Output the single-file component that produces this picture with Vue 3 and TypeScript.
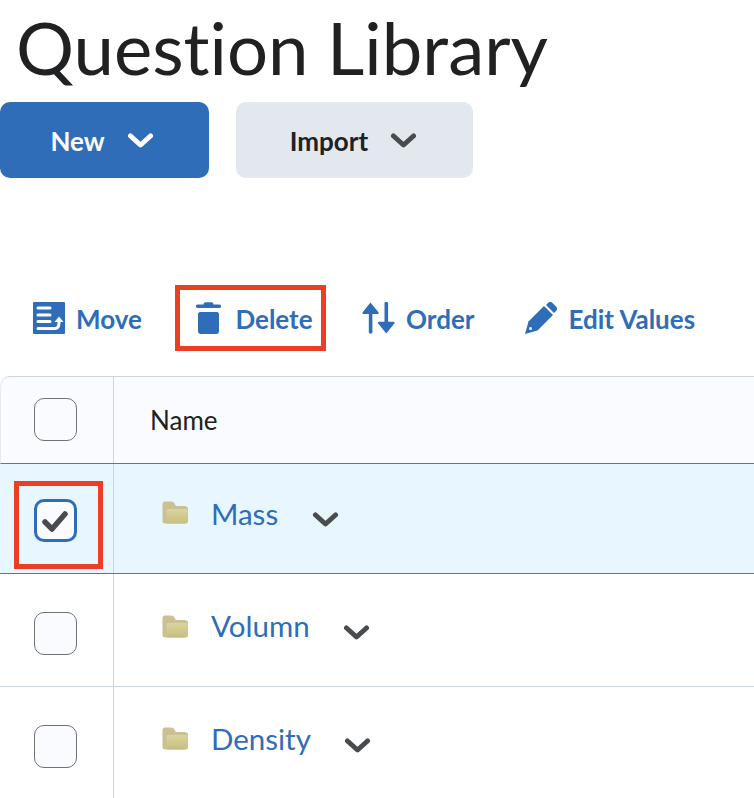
<script setup lang="ts">
interface Row { name: string; selected: boolean }
const rows: Row[] = [
  { name: 'Mass', selected: true },
  { name: 'Volumn', selected: false },
  { name: 'Density', selected: false },
]
</script>

<template>
  <main class="page">
    <h1 class="title">Question Library</h1>
    <div class="buttons">
      <button class="btn primary">New
        <svg class="chev" viewBox="0 0 26 18"><path d="M3 4l10 9 10-9" /></svg>
      </button>
      <button class="btn secondary">Import
        <svg class="chev" viewBox="0 0 26 18"><path d="M3 4l10 9 10-9" /></svg>
      </button>
    </div>

    <div class="toolbar">
      <a class="tool move">
        <svg viewBox="0 0 32 32" class="ti">
          <path d="M1 0h30a1 1 0 0 1 1 1v30a1 1 0 0 1-1 1H1a1 1 0 0 1-1-1V1a1 1 0 0 1 1-1z" fill="#2f6db8" />
          <g stroke="#fff" stroke-width="3" stroke-linecap="round" fill="none">
            <path d="M5 6h12M5 13h12M5 19.500h12M5 26.500h17c3 0 4-2 4-6" />
          </g>
          <path d="M21.500 20l4.500-5.500 4.500 5.500z" fill="#fff" />
        </svg>
        Move
      </a>
      <a class="tool del">
        <svg viewBox="0 0 26 32" class="ti">
          <path d="M8 2.500C8 1 9 .3 10 .3h6c1 0 2 .7 2 2.200h6c2 0 2 3.500 0 3.500H2C0 6 0 2.500 2 2.500z" fill="#2f6db8" />
          <path d="M2.500 12c0-1 1-2 2-2h17c1 0 2 1 2 2v17c0 2-1 3-3 3h-15c-2 0-3-1-3-3z" fill="#2f6db8" />
        </svg>
        Delete
      </a>
      <a class="tool order">
        <svg viewBox="0 0 33 33" class="ti">
          <path d="M8.200 0.500L16.500 10.500c.6.900.2 1.800-.7 1.800H10.200v19.200c0 1.500-3.700 1.500-3.700 0V12.300H.9c-.9 0-1.300-.9-.7-1.800z" fill="#2f6db8" />
          <path d="M24.500 32.500L32.800 22.200c.6-.9.2-1.800-.7-1.800H26.400V1c0-1.500-3.700-1.500-3.700 0v19.400H16.900c-.9 0-1.300.9-.7 1.800z" fill="#2f6db8" />
        </svg>
        Order
      </a>
      <a class="tool edit">
        <svg viewBox="0 0 32 32" class="ti">
          <path d="M0 32L3.500 19.500 19 4 28 13 12.500 28.500z" fill="#2f6db8" />
          <path d="M21 3l2-2c1.500-1.500 3-1.500 4.500 0l3.500 3.500c1.500 1.500 1.500 3 0 4.500l-2 2z" fill="#2f6db8" />
          <circle cx="5.500" cy="26.500" r="1.500" fill="#fff" />
        </svg>
        Edit Values
      </a>
    </div>

    <section class="table">
      <div class="row head">
        <div class="check-cell"><span class="box empty" /></div>
        <div class="name-cell">Name</div>
      </div>
      <div v-for="r in rows" :key="r.name" class="row" :class="[{ selected: r.selected }, r.name.toLowerCase()]">
        <div class="check-cell">
          <span class="box" :class="{ on: r.selected }">
            <svg v-if="r.selected" viewBox="0 0 26 22" class="tick"><path d="M3 12l7 7L23 4" /></svg>
          </span>
        </div>
        <div class="name-cell">
          <svg class="folder" viewBox="0 0 26 23">
            <defs>
              <linearGradient :id="'f-' + r.name" x1="0" y1="0" x2="0" y2="1">
                <stop offset="0" stop-color="#dad59f" />
                <stop offset="1" stop-color="#c6bf80" />
              </linearGradient>
            </defs>
            <path d="M0.500 3C0.500 1.500 1.500.5 3 .5h6.500c1.500 0 2.500 1 3.500 3l1 1.500h8.500c2 0 3.500 1 3.500 3V20c0 1.500-1 2.500-2.500 2.500H3c-1.500 0-2.500-1-2.500-2.500z" fill="#c9c193" />
            <path d="M4.500 9.500c0-1 .5-1.500 1.500-1.500H24c1 0 1.500.5 1.500 1.500V20c0 1.500-1 2.500-2.500 2.500H5.500c-.5 0-1-.5-1-1.500z" :fill="'url(#f-' + r.name + ')'" />
          </svg>
          <a class="link">{{ r.name }}</a>
          <svg class="chev dark" viewBox="0 0 26 18"><path d="M3 4l10 9 10-9" /></svg>
        </div>
      </div>
    </section>

    <div class="mark mark-delete" />
    <div class="mark mark-check" />
  </main>
</template>

<style>
html, body { margin: 0; background: #fff; overflow: hidden; }
</style>

<style scoped>
.page {
  position: relative;
  width: 754px;
  height: 798px;
  overflow: hidden;
  font-family: Lato, "Liberation Sans", sans-serif;
  font-variant-ligatures: none;
  color: #202122;
}
.title {
  margin: 0;
  padding: 4px 0 0 16px;
  height: 102px;
  box-sizing: border-box;
  font-size: 72.500px;
  line-height: 86px;
  font-weight: 400;
}
.buttons { display: flex; gap: 27px; height: 76px; }
.btn {
  display: flex;
  align-items: center;
  justify-content: center;
  gap: 22px;
  border: 0;
  border-radius: 10px;
  font-family: inherit;
  font-size: 26px;
  font-weight: 700;
  padding: 2px 0 0;
}
.primary { width: 209px; background: #2f6db8; color: #fff; padding-right: 5px; }
.secondary { width: 237px; background: #e3e8ef; color: #202122; padding-right: 2px; }
.chev { width: 27px; height: 18px; fill: none; stroke: #fff; stroke-width: 5; stroke-linecap: round; stroke-linejoin: round; }
.secondary .chev, .chev.dark { stroke: #494c4e; }
.toolbar { position: relative; height: 198px; box-sizing: border-box; padding-top: 124px; display: flex; }
.tool {
  display: flex;
  align-items: center;
  gap: 12px;
  height: 34px;
  color: #2f6db8;
  font-size: 26px;
  font-weight: 700;
  white-space: nowrap;
}
.ti { width: 32px; height: 32px; flex: none; margin-top: -2px; }
.move { margin-left: 33px; gap: 11px; }
.del { margin-left: 53px; gap: 13.500px; }
.del .ti { width: 27px; }
.order { margin-left: 49.500px; gap: 11px; }
.order .ti { width: 33px; }
.edit { margin-left: 50px; gap: 12px; }
.table { border-top: 1px solid #cdd5dc; border-top-left-radius: 10px; }
.row { display: flex; }
.check-cell {
  width: 114px;
  flex: none;
  box-sizing: border-box;
  border-right: 1px solid #cdd5dc;
  display: flex;
  align-items: center;
  justify-content: center;
  padding-right: 3px;
}
.name-cell { flex: 1; display: flex; align-items: center; box-sizing: border-box; }
.head { height: 86px; background: #fafbff; border-bottom: 1px solid #6e7376; border-left: 1px solid #e6eaf0; border-top-left-radius: 10px; }
.head .check-cell { width: 113px; padding-right: 3px; padding-bottom: 2px; }
.head .name-cell { padding-left: 36px; font-size: 26px; }
.mass { height: 109px; background: #e8f6ff; border-bottom: 1px solid #6e7376; }
.volumn { height: 112px; border-bottom: 1px solid #cdd5dc; }
.density { height: 112px; }
.mass .check-cell { padding-top: 4px; }
.volumn .check-cell, .density .check-cell { padding-top: 6px; }
.row:not(.head) .name-cell { padding-left: 47.500px; padding-bottom: 9px; font-size: 29.500px; }
.row.mass .name-cell { padding-bottom: 11px; }
.box {
  width: 43px;
  height: 43px;
  box-sizing: border-box;
  border: 1px solid #6e7376;
  border-radius: 10px;
  background: #fafbff;
  display: flex;
  align-items: center;
  justify-content: center;
}
.box.on { border: 3px solid #2f6db8; }
.tick { width: 26px; height: 22px; fill: none; stroke: #494c4e; stroke-width: 5.500; stroke-linecap: round; stroke-linejoin: round; }
.folder { width: 26px; height: 23px; flex: none; margin-bottom: 1px; }
.volumn .folder { margin-bottom: -1px; }
.link { margin-left: 23.500px; color: #2f6db8; }
.row:not(.head) .chev { margin-left: 33.500px; margin-top: 14px; }
.mass .chev { margin-top: 16px; }
.mark { position: absolute; border: 5px solid #ea3f25; box-sizing: border-box; }
.mark-delete { left: 175px; top: 285px; width: 151px; height: 66px; }
.mark-check { left: 14px; top: 481px; width: 89px; height: 88px; }
</style>
